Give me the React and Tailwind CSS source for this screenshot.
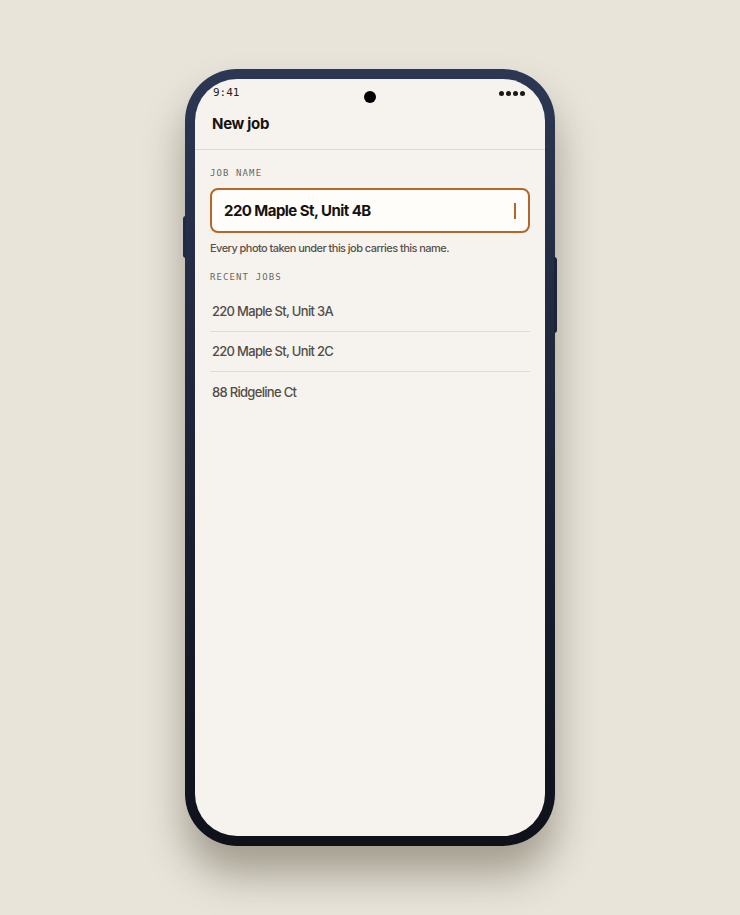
import React from "react";

const recentJobs = ["220 Maple St, Unit 3A", "220 Maple St, Unit 2C", "88 Ridgeline Ct"];

const App = () => {
  return (
    <div className="w-full h-[915px] bg-[#e8e4da] flex justify-center pt-[69px] font-['Inter','Liberation_Sans',sans-serif]">
      <div className="relative w-[370px] h-[777px] rounded-[52px] p-[10px] bg-gradient-to-b from-[#2c3754] to-[#0f111a] shadow-[0_28px_40px_rgba(60,50,30,0.4)]">
        {/* side buttons */}
        <div className="absolute -left-[2px] top-[147px] w-[3px] h-[42px] bg-[#1f2a44] rounded-l-sm" />
        <div className="absolute -right-[2px] top-[188px] w-[3px] h-[76px] bg-[#1c2538] rounded-r-sm" />

        <div className="relative h-full rounded-[42px] bg-[#f6f3ee] overflow-hidden">
          {/* camera */}
          <div className="absolute left-1/2 top-[12px] -translate-x-1/2 w-[12px] h-[12px] rounded-full bg-black" />

          {/* status bar */}
          <div className="h-[28px] flex items-center justify-between pl-[18px] pr-[20px]">
            <span className="font-['DejaVu_Sans_Mono',monospace] text-[11px] text-[#222] pt-[1px]">9:41</span>
            <div className="flex gap-[2px]">
              <span className="w-[5px] h-[5px] rounded-full bg-[#1a1a1a]" />
              <span className="w-[5px] h-[5px] rounded-full bg-[#1a1a1a]" />
              <span className="w-[5px] h-[5px] rounded-full bg-[#1a1a1a]" />
              <span className="w-[5px] h-[5px] rounded-full bg-[#1a1a1a]" />
            </div>
          </div>

          {/* header */}
          <div className="pl-[17px] pt-[7px] pb-[15px] border-b border-[#dedad2]">
            <h1 className="text-[15px] leading-[20px] font-bold text-[#161412] tracking-[-0.3px]">New job</h1>
          </div>

          {/* content */}
          <div className="px-[15px] pt-[17px]">
            <div className="font-['DejaVu_Sans_Mono',monospace] text-[9px] leading-[12px] tracking-[1.1px] text-[#6d6760]">
              JOB NAME
            </div>
            <div className="mt-[9px] h-[45px] rounded-[8px] border-2 border-[#b5672a] bg-[#fffdf9] flex items-center justify-between pl-[12px] pr-[12px]">
              <span className="text-[15px] leading-[20px] pt-[1px] font-bold text-[#151311] tracking-[-0.55px]">220 Maple St, Unit 4B</span>
              <span className="w-[2px] h-[16px] bg-[#b5672a]" />
            </div>
            <p className="mt-[8px] text-[11px] leading-[14px] font-medium text-[#57514b] tracking-[-0.55px]">
              Every photo taken under this job carries this name.
            </p>
            <div className="mt-[16px] font-['DejaVu_Sans_Mono',monospace] text-[9px] leading-[12px] tracking-[1.1px] text-[#6d6760]">
              RECENT JOBS
            </div>
            <ul className="mt-[8px]">
              {recentJobs.map((job, index) => (
                <li
                  key={index}
                  className={`flex items-center px-[2px] pt-[1px] text-[13px] font-medium text-[#524d47] tracking-[-0.7px] ${
                    index === 0 ? "h-[41px]" : "h-[40px]"
                  } ${index < recentJobs.length - 1 ? "border-b border-[#e0dcd4]" : ""}`}
                >
                  {job}
                </li>
              ))}
            </ul>
          </div>
        </div>
      </div>
    </div>
  );
};

export default App;
